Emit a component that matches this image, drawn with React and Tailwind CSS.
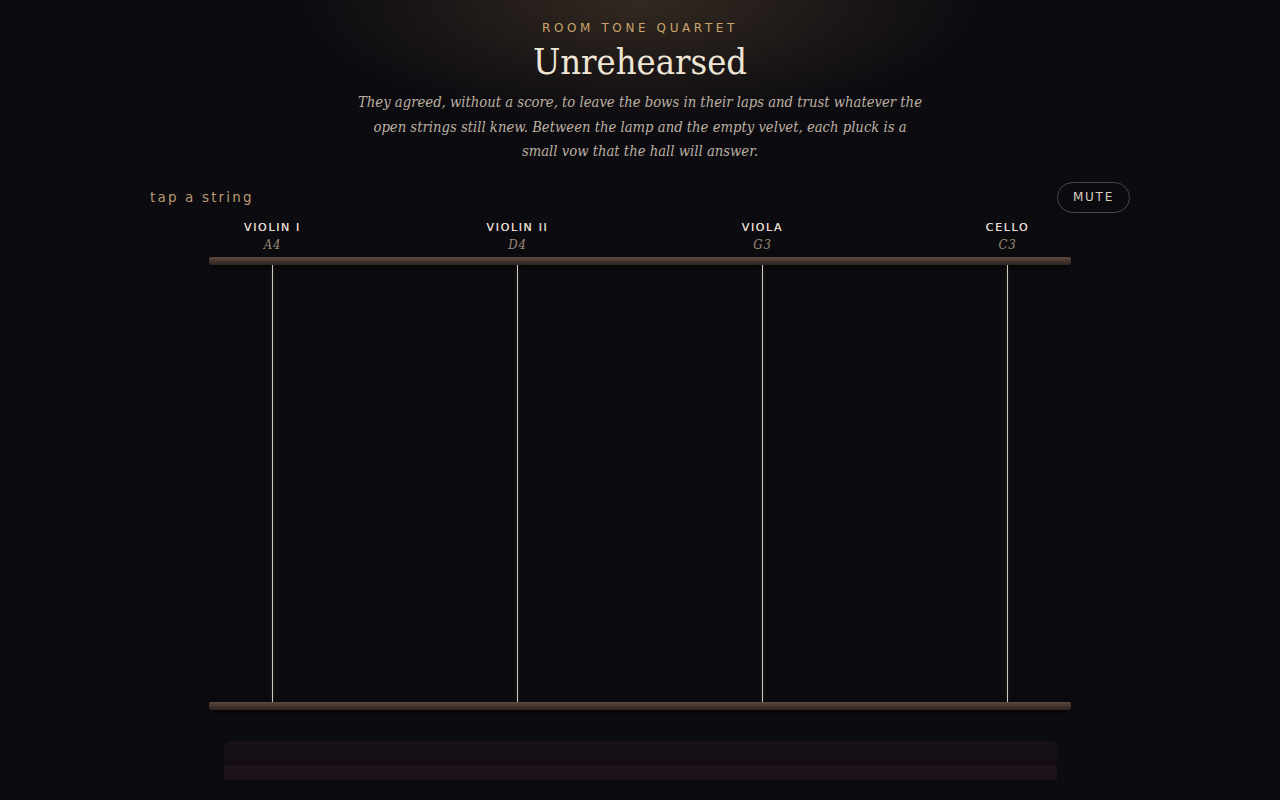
import React, { useState } from "react";

const strings = [
  { name: "VIOLIN I", note: "A4" },
  { name: "VIOLIN II", note: "D4" },
  { name: "VIOLA", note: "G3" },
  { name: "CELLO", note: "C3" },
];

const serif = { fontFamily: '"DejaVu Serif Condensed", "DejaVu Serif", serif' };

const App = () => {
  const [muted, setMuted] = useState(false);

  return (
    <div className="min-h-screen w-full overflow-hidden bg-[#0c0b10] bg-[radial-gradient(ellipse_340px_125px_at_50%_0%,rgba(105,82,55,0.42),transparent)] font-['DejaVu_Sans',sans-serif]">
      <div className="mx-auto w-[980px] pt-[20px]">
        {/* header */}
        <div className="text-center">
          <p className="text-[12px] leading-[16px] tracking-[0.3em] text-[#cba56f]">
            ROOM TONE QUARTET
          </p>
          <h1
            style={serif}
            className="mt-[2px] text-[36px] leading-[48px] text-[#efe6d6]"
          >
            Unrehearsed
          </h1>
          <p
            style={serif}
            className="mx-auto mt-[4px] w-[620px] text-[14.7px] italic leading-[24.5px] text-[#bcb1a2]"
          >
            They agreed, without a score, to leave the bows in their laps and trust whatever the
            <br />
            open strings still knew. Between the lamp and the empty velvet, each pluck is a
            <br />
            small vow that the hall will answer.
          </p>
        </div>

        {/* controls */}
        <div className="mt-[18px] flex items-center justify-between">
          <span className="text-[13.5px] tracking-[0.16em] text-[#b89a70]">tap a string</span>
          <button
            onClick={() => setMuted(!muted)}
            className="h-[31px] w-[73px] rounded-full border border-[#4a4540] text-[12px] tracking-[0.15em] text-[#d8cfc2]"
          >
            {muted ? "UNMUTE" : "MUTE"}
          </button>
        </div>

        {/* labels */}
        <div className="mt-[8px] grid grid-cols-4 text-center">
          {strings.map((s) => (
            <div key={s.name}>
              <p className="text-[11px] leading-[14px] tracking-[0.15em] text-[#e2d9cc] [text-shadow:0_0_0.4px_#e2d9cc]">
                {s.name}
              </p>
              <p style={serif} className="mt-[2px] text-[13px] italic leading-[16px] tracking-[0.06em] text-[#9c8a70]">
                {s.note}
              </p>
            </div>
          ))}
        </div>

        {/* instrument */}
        <div className="mt-[4px]">
          <div className="mx-auto h-[8px] w-[88%] rounded-[2px] bg-gradient-to-b from-[#5c493e] to-[#2f221e] shadow-[0_2px_6px_rgba(0,0,0,0.6)]" />
          <div className="grid grid-cols-4">
            {strings.map((s) => (
              <div key={s.name} className="flex justify-center">
                <div className="h-[437px] w-px bg-[#cdc5bb] shadow-[0_0_3px_rgba(220,210,200,0.25)]" />
              </div>
            ))}
          </div>
          <div className="mx-auto h-[8px] w-[88%] rounded-[2px] bg-gradient-to-b from-[#5c493e] to-[#2f221e] shadow-[0_2px_6px_rgba(0,0,0,0.6)]" />
        </div>

        {/* velvet case */}
        <div className="mx-auto mt-[31px] w-[85%]">
          <div className="h-[24px] rounded-t-[6px] bg-gradient-to-b from-[#19111a] to-[#130c12]" />
          <div className="h-[15px] rounded-t-[4px] bg-gradient-to-b from-[#1f141c] to-[#1a1118]" />
        </div>
      </div>
    </div>
  );
};

export default App;
